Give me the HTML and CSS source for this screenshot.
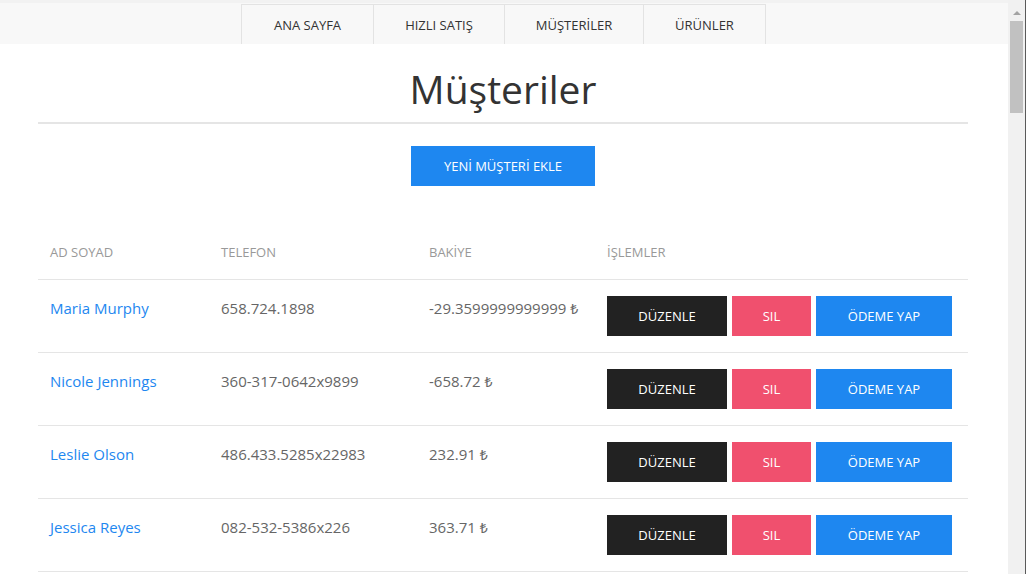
FILE: index.html
```html
<!DOCTYPE html>
<html lang="tr">
<head>
<meta charset="utf-8">
<title>Müşteriler</title>
<link rel="stylesheet" href="styles.css">
</head>
<body>
<div class="window">
  <div class="viewport">
    <header class="topbar">
      <nav class="nav">
        <a class="nav-item" href="#">Ana Sayfa</a>
        <a class="nav-item" href="#">Hızlı Satış</a>
        <a class="nav-item" href="#">Müşteriler</a>
        <a class="nav-item" href="#">Ürünler</a>
      </nav>
    </header>
    <main class="container">
      <h1 class="heading">Müşteriler</h1>
      <div class="actions">
        <button class="btn btn-primary btn-wide">Yeni Müşteri Ekle</button>
      </div>
      <table class="table">
        <colgroup>
          <col class="col-name"><col class="col-phone"><col class="col-balance"><col class="col-ops">
        </colgroup>
        <thead>
          <tr><th>Ad Soyad</th><th>Telefon</th><th>Bakiye</th><th>İşlemler</th></tr>
        </thead>
        <tbody>
          <tr>
            <td><a class="link" href="#">Maria Murphy</a></td>
            <td>658.724.1898</td>
            <td>-29.3599999999999 <span class="lira">₺</span></td>
            <td><div class="btn-group"><button class="btn btn-dark">Düzenle</button><button class="btn btn-danger">SIL</button><button class="btn btn-primary">Ödeme Yap</button></div></td>
          </tr>
          <tr>
            <td><a class="link" href="#">Nicole Jennings</a></td>
            <td>360-317-0642x9899</td>
            <td>-658.72 <span class="lira">₺</span></td>
            <td><div class="btn-group"><button class="btn btn-dark">Düzenle</button><button class="btn btn-danger">SIL</button><button class="btn btn-primary">Ödeme Yap</button></div></td>
          </tr>
          <tr>
            <td><a class="link" href="#">Leslie Olson</a></td>
            <td>486.433.5285x22983</td>
            <td>232.91 <span class="lira">₺</span></td>
            <td><div class="btn-group"><button class="btn btn-dark">Düzenle</button><button class="btn btn-danger">SIL</button><button class="btn btn-primary">Ödeme Yap</button></div></td>
          </tr>
          <tr>
            <td><a class="link" href="#">Jessica Reyes</a></td>
            <td>082-532-5386x226</td>
            <td>363.71 <span class="lira">₺</span></td>
            <td><div class="btn-group"><button class="btn btn-dark">Düzenle</button><button class="btn btn-danger">SIL</button><button class="btn btn-primary">Ödeme Yap</button></div></td>
          </tr>
        </tbody>
      </table>
    </main>
  </div>
  <div class="scrollbar">
    <div class="scroll-arrow"></div>
    <div class="scroll-thumb"></div>
  </div>
  <div class="window-edge"></div>
</div>
</body>
</html>
```
FILE: styles.css
```css
* { box-sizing: border-box; }
html, body { margin: 0; padding: 0; }
body {
  font-family: "Open Sans", "Noto Sans", "DejaVu Sans", sans-serif;
  font-size: 15px;
  line-height: 24px;
  color: #666;
  background: #fff;
}
.window {
  display: flex;
  height: 574px;
  overflow: hidden;
}
.viewport {
  width: 1008px;
  flex: none;
  overflow: hidden;
  padding-right: 2px;
}
.scrollbar {
  width: 17px;
  flex: none;
  background: #f1f1f1;
  display: flex;
  flex-direction: column;
  align-items: center;
}
.scroll-arrow {
  margin-top: 11px;
  width: 0;
  height: 0;
  border-left: 4px solid transparent;
  border-right: 4px solid transparent;
  border-bottom: 4px solid #a3a3a3;
}
.scroll-thumb {
  margin-top: 6px;
  width: 13px;
  height: 92px;
  background: #c1c1c1;
}
.window-edge {
  width: 1px;
  flex: none;
  background: #5a5a5a;
}

/* top nav */
.topbar {
  height: 44px;
  background: #f8f8f8;
  border-top: 3px solid #f2f2f2;
  padding-top: 1px;
  margin-right: -2px;
  padding-right: 2px;
  display: flex;
  justify-content: center;
}
.nav {
  display: flex;
  height: 40px;
  border-left: 1px solid #e3e3e3;
  border-top: 1px solid #e3e3e3;
  margin-left: 1px;
}
.nav-item {
  display: flex;
  align-items: center;
  justify-content: center;
  font-size: 13px;
  color: #333;
  text-decoration: none;
  text-transform: uppercase;
  border-right: 1px solid #e3e3e3;
}
.nav-item:nth-child(1) { width: 132px; }
.nav-item:nth-child(2) { width: 131px; }
.nav-item:nth-child(3) { width: 139px; }
.nav-item:nth-child(4) { width: 122px; }

/* content */
.container {
  width: 930px;
  margin: 0 auto;
}
.heading {
  margin: 21px 0 0;
  padding-bottom: 9px;
  border-bottom: 2px solid #e5e5e5;
  font-size: 39px;
  line-height: 48px;
  font-weight: 400;
  color: #333;
  text-align: center;
}
.actions {
  display: flex;
  justify-content: center;
  margin-top: 22px;
}
.btn {
  font-family: inherit;
  border: none;
  margin: 0;
  height: 40px;
  padding: 0 30px;
  font-size: 13px;
  line-height: 40px;
  text-transform: uppercase;
  color: #fff;
  cursor: pointer;
}
.btn-wide { width: 184px; padding: 0; }
.btn-primary { background: #1e87f0; }
.btn-danger { background: #f0506e; }
.btn-dark { background: #222; }

/* table */
.table {
  width: 100%;
  border-collapse: collapse;
  margin-top: 39px;
}
.col-name { width: 171px; }
.col-phone { width: 208px; }
.col-balance { width: 178px; }
.table th {
  text-align: left;
  font-weight: 400;
  font-size: 13px;
  color: #999;
  text-transform: uppercase;
  padding: 15px 12px;
  vertical-align: bottom;
  border-bottom: 1px solid #e5e5e5;
}
.table td {
  padding: 16px 12px;
  vertical-align: top;
  border-bottom: 1px solid #e5e5e5;
  color: #666;
}
.lira {
  font-family: "Noto Sans", "DejaVu Sans", sans-serif;
  font-weight: 400;
  font-size: 14px;
}
.link {
  color: #1e87f0;
  text-decoration: none;
}
.btn-group {
  display: flex;
  gap: 5px;
}
.btn-group .btn-dark { width: 120px; padding: 0; }
.btn-group .btn-danger { width: 79px; padding: 0; }
.btn-group .btn-primary { width: 136px; padding: 0; }
```
